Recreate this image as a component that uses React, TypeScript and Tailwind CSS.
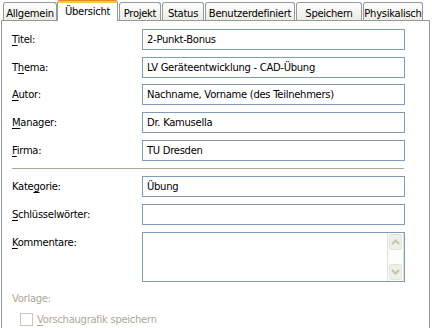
import React from 'react';

const tabs = [
  { label: 'Allgemein', w: 'w-[54px]', ml: 'ml-[3px]' },
  { label: 'Übersicht', w: 'w-[61px]', ml: 'ml-0', active: true },
  { label: 'Projekt', w: 'w-[42px]', ml: 'ml-[1px]' },
  { label: 'Status', w: 'w-[42px]', ml: 'ml-[1px]' },
  { label: 'Benutzerdefiniert', w: 'w-[90px]', ml: 'ml-[1px]' },
  { label: 'Speichern', w: 'w-[66px]', ml: 'ml-[1px]' },
  { label: 'Physikalisch', w: 'w-[60px]', ml: 'ml-[1px]' },
];

function Label({ pre, key1, post }: { pre: string; key1: string; post: string }) {
  return (
    <span>
      {pre}
      <span className="underline underline-offset-[2px]">{key1}</span>
      {post}
    </span>
  );
}

function Field({ label, value, mt }: { label: React.ReactNode; value: string; mt: string }) {
  return (
    <div className={`flex items-center ${mt}`}>
      <div className="w-[130px]">{label}</div>
      <div className="w-[263px] h-[21px] border border-[#7f9db9] bg-white pl-[4px] flex items-center">
        {value}
      </div>
    </div>
  );
}

function Chevron({ up }: { up?: boolean }) {
  return (
    <svg width="9" height="6" viewBox="0 0 9 6" className="block">
      <path
        d={up ? 'M1 5 L4.5 1.5 L8 5' : 'M1 1 L4.5 4.5 L8 1'}
        fill="none"
        stroke="#c3c3bb"
        strokeWidth="2"
      />
    </svg>
  );
}

export default function App() {
  return (
    <div
      className="w-[432px] h-[328px] bg-white overflow-hidden text-[10px] text-black tracking-[-0.28px]"
      style={{ fontFamily: '"DejaVu Sans", Verdana, sans-serif' }}
    >
      <div className="flex items-end h-[20px] relative z-10">
        {tabs.map((t) =>
          t.active ? (
            <div
              key={t.label}
              className={`${t.w} ${t.ml} h-[21px] -mb-px bg-white border-x border-[#919b9c] rounded-t-[3px] flex flex-col`}
            >
              <div className="h-[1px] bg-[#e68b2c] rounded-t-[3px]" />
              <div className="h-[2px] bg-[#ffc73c]" />
              <div className="flex-1 flex justify-center pt-[1px]">{t.label}</div>
            </div>
          ) : (
            <div
              key={t.label}
              className={`${t.w} ${t.ml} h-[18px] border border-b-0 border-[#919b9c] rounded-t-[3px] bg-gradient-to-b from-white to-[#ecebe5] flex justify-center pt-[3px]`}
            >
              {t.label}
            </div>
          )
        )}
      </div>

      <div className="ml-[1px] mr-[2px] h-[320px] border border-[#919b9c] bg-white pl-[10px]">
        <Field label={<Label pre="" key1="T" post="itel:" />} value="2-Punkt-Bonus" mt="mt-[8px]" />
        <Field label={<Label pre="T" key1="h" post="ema:" />} value="LV Geräteentwicklung - CAD-Übung" mt="mt-[7px]" />
        <Field label={<Label pre="" key1="A" post="utor:" />} value="Nachname, Vorname (des Teilnehmers)" mt="mt-[6px]" />
        <Field label={<Label pre="" key1="M" post="anager:" />} value="Dr. Kamusella" mt="mt-[7px]" />
        <Field label={<Label pre="" key1="F" post="irma:" />} value="TU Dresden" mt="mt-[7px]" />

        <div className="w-[392px] h-px bg-[#aca899] mt-[7px]" />

        <Field label={<Label pre="Kate" key1="g" post="orie:" />} value="Übung" mt="mt-[7px]" />
        <Field label={<Label pre="" key1="S" post="chlüsselwörter:" />} value="" mt="mt-[7px]" />

        <div className="flex mt-[7px]">
          <div className="w-[130px] pt-[3px]">
            <Label pre="" key1="K" post="ommentare:" />
          </div>
          <div className="w-[263px] h-[50px] border border-[#7f9db9] bg-white flex justify-end">
            <div className="w-[17px] h-full border-x border-[#e2e0d6] bg-[#fdfdfb] flex flex-col justify-between py-[1px]">
              <div className="h-[16px] mx-[1px] rounded-[2px] bg-[#efefe9] border border-[#e4e3dc] flex items-center justify-center">
                <Chevron up />
              </div>
              <div className="h-[16px] mx-[1px] rounded-[2px] bg-[#efefe9] border border-[#e4e3dc] flex items-center justify-center">
                <Chevron />
              </div>
            </div>
          </div>
        </div>

        <div className="text-[#aca899] mt-[9px]">Vorlage:</div>
        <div className="flex items-center mt-[6px] ml-[8px] text-[#aca899]">
          <div className="w-[13px] h-[13px] border border-[#cac8bb] bg-white mr-[4px]" />
          <Label pre="" key1="V" post="orschaugrafik speichern" />
        </div>
      </div>
    </div>
  );
}
